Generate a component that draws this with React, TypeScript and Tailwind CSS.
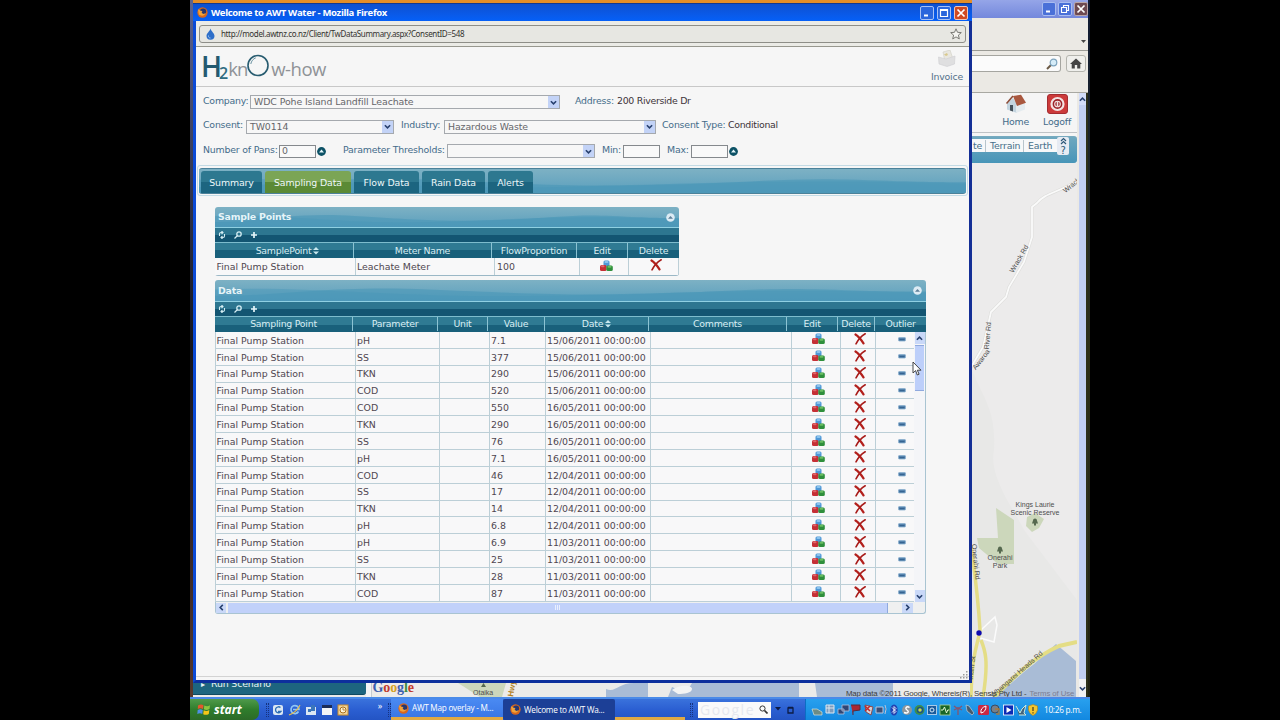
import { ReactNode } from "react";
import clsx from "clsx";

type SampleRow = {
  parameter: string;
  value: string;
  date: string;
};

const rows: SampleRow[] = [
  { parameter: "pH", value: "7.1", date: "15/06/2011" },
  { parameter: "SS", value: "377", date: "15/06/2011" },
  { parameter: "TKN", value: "290", date: "15/06/2011" },
  { parameter: "COD", value: "520", date: "15/06/2011" },
  { parameter: "COD", value: "550", date: "16/05/2011" },
  { parameter: "TKN", value: "290", date: "16/05/2011" },
  { parameter: "SS", value: "76", date: "16/05/2011" },
  { parameter: "pH", value: "7.1", date: "16/05/2011" },
  { parameter: "COD", value: "46", date: "12/04/2011" },
  { parameter: "SS", value: "17", date: "12/04/2011" },
  { parameter: "TKN", value: "14", date: "12/04/2011" },
  { parameter: "pH", value: "6.8", date: "12/04/2011" },
  { parameter: "pH", value: "6.9", date: "11/03/2011" },
  { parameter: "SS", value: "25", date: "11/03/2011" },
  { parameter: "TKN", value: "28", date: "11/03/2011" },
  { parameter: "COD", value: "87", date: "11/03/2011" },
];

const tabs = [
  { label: "Summary", width: "w-[61px]" },
  { label: "Sampling Data", width: "w-[86px]", active: true },
  { label: "Flow Data", width: "w-[65px]" },
  { label: "Rain Data", width: "w-[63px]" },
  { label: "Alerts", width: "w-[45px]" },
];

/* ---------- icons ---------- */

const FirefoxIcon = () => (
  <svg width="11" height="11" viewBox="0 0 12 12" className="shrink-0">
    <circle cx="6" cy="6" r="5.6" fill="#d9661c" />
    <circle cx="6.6" cy="5" r="3.4" fill="#27366f" />
    <path d="M1 2.500 4 4l2 .3-1 1.400 1.600 1.800 3-.6C8.500 10 4 10.500 2 8Z" fill="#f2a33a" />
  </svg>
);

const EditIcon = () => (
  <svg width="13" height="12" viewBox="0 0 13 12">
    <rect x="3.500" y="0.500" width="6" height="6" rx="1.500" fill="#4e97d6" />
    <rect x="4.500" y="1" width="4" height="2" rx="1" fill="#8cc4ee" />
    <rect x="0" y="5" width="6.500" height="6" rx="1.500" fill="#c52f35" />
    <rect x="1" y="5.300" width="3.500" height="2" rx="1" fill="#e0666a" />
    <rect x="6.300" y="5.500" width="6.500" height="5.500" rx="1.500" fill="#2f8f3c" />
    <rect x="7.500" y="5.800" width="4" height="2" rx="1" fill="#69bd62" />
  </svg>
);

const DeleteIcon = () => (
  <svg width="12" height="12" viewBox="0 0 12 12" fill="none" strokeLinecap="round">
    <path d="M1.500 1.500C4 3 7 6.500 9.500 10.300" stroke="#b3201c" strokeWidth="2.200" />
    <path d="M11.200.8C7.500 3 4.500 6 2 10.800" stroke="#a81c1a" strokeWidth="1.600" />
  </svg>
);

const OutlierIcon = () => (
  <svg width="8" height="5" viewBox="0 0 8 5">
    <rect x="0.500" y="0.500" width="7" height="3.500" rx="0.800" fill="#5583ad" stroke="#8bb0cf" strokeWidth=".8" />
    <path d="M1.500 2.700h5" stroke="#2f5d8c" strokeWidth="1" />
  </svg>
);

const SortIcon = () => (
  <svg width="6" height="8" viewBox="0 0 6 8" fill="#c9e8ef">
    <path d="M3 0 6 3H0ZM3 7.500 0 4.500h6Z" />
  </svg>
);

const Chevron = ({ dir }: { dir: "up" | "down" | "left" | "right" }) => (
  <svg
    width="7"
    height="7"
    viewBox="0 0 8 8"
    className={clsx(
      dir === "up" && "rotate-180",
      dir === "left" && "rotate-90",
      dir === "right" && "-rotate-90"
    )}
  >
    <path d="m1 2.500 3 3 3-3" fill="none" stroke="#27406e" strokeWidth="1.800" />
  </svg>
);

const UpDot = () => (
  <svg width="9" height="9" viewBox="0 0 9 9">
    <circle cx="4.500" cy="4.500" r="4.400" fill="#0d5266" />
    <path d="M4.500 2.500 7 5.500H2Z" fill="#e6f6fa" />
  </svg>
);

const CollapseDot = () => (
  <svg width="9" height="9" viewBox="0 0 9 9">
    <circle cx="4.500" cy="4.500" r="4.300" fill="#dcebf4" />
    <path d="M4.500 3 7 5.800H2Z" fill="#5f7f98" />
  </svg>
);

const Waves = () => (
  <svg className="absolute inset-0 h-full w-full" viewBox="0 0 700 20" preserveAspectRatio="none">
    <path
      d="M0 15C60 16 110 5 210 9s140 6 220 4 110-6 170-4 70 2 100 2V20H0Z"
      fill="#4795b6"
      fillOpacity=".55"
    />
    <path d="M0 9c90-4 190 9 330 6s200-7 370-3v8H0Z" fill="#4a97b9" fillOpacity=".45" />
  </svg>
);

/* ---------- small controls ---------- */

const Label = ({ children, className }: { children: ReactNode; className?: string }) => (
  <span className={clsx("shrink-0 pb-[3px] tracking-[-0.200px] text-[#446c8a]", className)}>{children}</span>
);

const Select = ({ value, className }: { value?: string; className: string }) => (
  <div
    className={clsx(
      "flex h-[14px] shrink-0 items-center justify-between border border-[#a5a9ae] bg-[#f7f7f7] pl-[3px] text-[#66666a]",
      className
    )}
  >
    <span className="tracking-[-0.090px]">{value}</span>
    <span className="flex h-[12px] w-[11px] items-center justify-center bg-[#c3d3f7]">
      <Chevron dir="down" />
    </span>
  </div>
);

const TextBox = ({ value }: { value?: string }) => (
  <div className="flex h-[13px] w-[37px] shrink-0 items-center border border-[#85898d] bg-[#f9f9f9] pl-[2px] text-[#66666a]">
    {value}
  </div>
);

const PanelTitle = ({ children, className }: { children: ReactNode; className: string }) => (
  <div
    className={clsx(
      "relative flex items-center justify-between overflow-hidden rounded-t-[3px] bg-linear-to-b from-[#7db1c4] to-[#5a9fbd] pr-[4px] pl-[3px]",
      className
    )}
  >
    <Waves />
    <span className="relative text-[9.400px] font-bold tracking-[-0.200px] text-[#e6f4f8]">{children}</span>
    <span className="relative">
      <CollapseDot />
    </span>
  </div>
);

const PanelToolbar = () => (
  <div className="flex h-[15px] items-center gap-[8px] border-t border-[#8fd0e2] bg-linear-to-b from-[#2d7690] from-50% to-[#135572] to-50% pl-[3px]">
    <svg width="8" height="8" viewBox="0 0 8 8" fill="none" stroke="#d4edf3" strokeWidth="1.100">
      <path d="M4.500 1.500H3a1.500 1.500 0 0 0-1.500 1.500v2M3.500 6.500H5A1.500 1.500 0 0 0 6.500 5V3M3.500 0l1.500 1.500L3.500 3M4.500 8 3 6.500 4.500 5" />
    </svg>
    <svg width="8" height="8" viewBox="0 0 8 8" fill="none" stroke="#d4edf3" strokeWidth="1.300">
      <circle cx="5" cy="3" r="2.200" />
      <path d="M3.500 4.500.5 7.500" />
    </svg>
    <svg width="8" height="8" viewBox="0 0 8 8" fill="none" stroke="#e6f6fa" strokeWidth="1.700">
      <path d="M4 1v6M1 4h6" />
    </svg>
  </div>
);

const HeadCell = ({ children, last }: { children: ReactNode; last?: boolean }) => (
  <div
    className={clsx(
      "flex items-center justify-center gap-[2px] tracking-[-0.250px] text-[#d9eef3]",
      !last && "border-r border-[#8cc3d3]"
    )}
  >
    {children}
  </div>
);

const Cell = ({ children, className }: { children?: ReactNode; className?: string }) => (
  <div className={clsx("flex items-center border-r border-[#bccfd7]", className)}>{children}</div>
);

/* ---------- panels ---------- */

const SamplePoints = () => (
  <section className="w-[464px] rounded-b-[3px] border-b border-[#9bb8c6]">
    <PanelTitle className="h-[20px]">Sample Points</PanelTitle>
    <PanelToolbar />
    <div className="grid h-[16px] grid-cols-[139px_138px_85px_51px_51px] border-t border-[#7dbccd] bg-linear-to-b from-[#2f7a93] from-50% to-[#19607b] to-50%">
      <HeadCell>
        <span className="pl-[7px]">SamplePoint</span>
        <SortIcon />
      </HeadCell>
      <HeadCell>Meter Name</HeadCell>
      <HeadCell>FlowProportion</HeadCell>
      <HeadCell>Edit</HeadCell>
      <HeadCell last>Delete</HeadCell>
    </div>
    <div className="grid h-[17px] grid-cols-[141px_139px_85px_49px_50px] bg-[#f8f8f9] text-[#4f4650]">
      <Cell className="pt-px pl-[1.500px]">Final Pump Station</Cell>
      <Cell className="pt-px pl-[1px]">Leachate Meter</Cell>
      <Cell className="pt-px pl-[2px]">100</Cell>
      <Cell className="justify-center pb-[2px] pl-[5px]">
        <EditIcon />
      </Cell>
      <Cell className="justify-center pb-[3px] pl-[4px]">
        <DeleteIcon />
      </Cell>
    </div>
  </section>
);

const DataGrid = () => (
  <section className="mt-[4px] w-[711px] rounded-b-[3px]">
    <PanelTitle className="h-[21px]">Data</PanelTitle>
    <PanelToolbar />
    <div className="grid h-[16px] grid-cols-[138px_85px_50px_57px_104px_138px_51px_37px_51px] border-t border-[#7dbccd] bg-linear-to-b from-[#2f7a93] from-50% to-[#19607b] to-50% pb-px">
      <HeadCell>Sampling Point</HeadCell>
      <HeadCell>Parameter</HeadCell>
      <HeadCell>Unit</HeadCell>
      <HeadCell>Value</HeadCell>
      <HeadCell>
        Date
        <SortIcon />
      </HeadCell>
      <HeadCell>Comments</HeadCell>
      <HeadCell>Edit</HeadCell>
      <HeadCell>Delete</HeadCell>
      <HeadCell last>Outlier</HeadCell>
    </div>
    <div className="flex h-[270px]">
      <div className="w-[699px] border-l border-[#bccfd7]">
        {rows.map((row, index) => (
          <div
            key={index}
            className="grid h-[16.870px] grid-cols-[140px_84px_50px_56px_105px_141px_49px_35px_38px] border-b border-[#bccfd7] bg-[#f8f8f9] text-[#4f4650]"
          >
            <Cell className="pt-[1.500px] pl-[0.500px]">Final Pump Station</Cell>
            <Cell className="pt-[1.500px] pl-[1px]">{row.parameter}</Cell>
            <Cell />
            <Cell className="pt-[1.500px] pl-[1px]">{row.value}</Cell>
            <Cell className="pt-[1.500px] pl-[1px] tracking-[-0.020px] whitespace-nowrap">{row.date} 00:00:00</Cell>
            <Cell />
            <Cell className="justify-center pb-px pl-[4px]">
              <EditIcon />
            </Cell>
            <Cell className="justify-center pb-px pl-[4px]">
              <DeleteIcon />
            </Cell>
            <Cell className="justify-center border-r-0 pl-[14px]">
              <OutlierIcon />
            </Cell>
          </div>
        ))}
      </div>
      <div className="flex w-[12px] flex-col items-center border-r border-[#a9c4d2] bg-[#f4f5f8]">
        <span className="flex h-[12px] w-[10px] items-center justify-center bg-[#c9d8f8]">
          <Chevron dir="up" />
        </span>
        <span className="mt-px h-[46px] w-[9px] border-y border-[#8fa9de] bg-[#bdcffa]" />
        <span className="mt-auto flex h-[12px] w-[10px] items-center justify-center bg-[#c9d8f8]">
          <Chevron dir="down" />
        </span>
      </div>
    </div>
    <div className="flex h-[12px] items-center rounded-b-[3px] border-x border-b border-[#a9c4d2] bg-[#eff0f0]">
      <span className="flex h-[10px] w-[10px] items-center justify-center bg-[#c9d8f8]">
        <Chevron dir="left" />
      </span>
      <span className="ml-[2px] flex h-[10px] w-[660px] items-center justify-center gap-px border-r border-[#8fa9de] bg-[#c1d1fa]">
        <i className="h-[5px] w-px bg-[#eaf0ff]" />
        <i className="h-[5px] w-px bg-[#eaf0ff]" />
        <i className="h-[5px] w-px bg-[#eaf0ff]" />
      </span>
      <span className="ml-[14px] flex h-[10px] w-[11px] items-center justify-center bg-[#c9d8f8]">
        <Chevron dir="right" />
      </span>
    </div>
  </section>
);

/* ---------- popup window ---------- */

const TitleButton = ({ children, className }: { children: ReactNode; className: string }) => (
  <span className={clsx("flex h-[14px] w-[14px] items-center justify-center rounded-[2px] border", className)}>
    <svg width="10" height="10" viewBox="0 0 10 10" fill="none" stroke="#fff">
      {children}
    </svg>
  </span>
);

const Logo = () => (
  <div className="flex h-[36px] items-start pl-[5px] font-['Open_Sans',sans-serif]">
    <span className="text-[28px] leading-[38px] font-semibold tracking-[-3px] text-[#235a70]">H</span>
    <span className="pt-[13px] text-[16px] leading-[26px] font-semibold text-[#2f6b80]">2</span>
    <span className="text-[18.500px] leading-[44px] tracking-[-1px] text-[#8f9296]">kn</span>
    <svg width="22" height="23" viewBox="0 0 22 23" className="mt-[7px]" fill="none" stroke="#285c70">
      <circle cx="11" cy="11.500" r="10" strokeWidth="1.600" />
      <path d="M3.800 10c.6-3 2.200-5 5-6.200" strokeWidth="1" stroke="#6a93a2" />
    </svg>
    <span className="ml-[2px] text-[18.500px] leading-[44px] tracking-[-0.500px] text-[#8f9296]">w-how</span>
  </div>
);

const Popup = () => (
  <div className="absolute top-0 left-[193px] flex h-[683px] w-[779px] flex-col bg-[#f6f6f6]">
    <div className="h-[3px] bg-[#e58e27]" />
    <div className="flex h-[18px] items-center border-t border-[#12388f] bg-linear-to-b from-[#0e50cf] to-[#0560f8] pr-[4px] pl-[4px]">
      <FirefoxIcon />
      <span className="ml-[3px] font-['Open_Sans',sans-serif] text-[9.500px] font-bold tracking-[-0.330px] whitespace-nowrap text-white">
        Welcome to AWT Water - Mozilla Firefox
      </span>
      <div className="ml-auto flex gap-[3px]">
        <TitleButton className="border-[#a9c1f4] bg-[#2b66dc]">
          <path d="M2 7.500h4" strokeWidth="2" />
        </TitleButton>
        <TitleButton className="border-[#a9c1f4] bg-[#2b66dc]">
          <path d="M1.500 1.500h7v7h-7zM1.500 2.500h7" strokeWidth="1.200" />
        </TitleButton>
        <TitleButton className="border-[#f0c4b4] bg-[#cf4a22]">
          <path d="m1.500 1.500 7 7m0-7-7 7" strokeWidth="1.700" />
        </TitleButton>
      </div>
    </div>
    <div className="flex min-h-0 flex-1 flex-col border-t-0 border-r-[3px] border-b-[3px] border-l-[3px] border-r-[#142f96] border-b-[#0d2f9c] border-l-[#0b4ad6]">
      <div className="h-[26px] border-b border-[#98988f] bg-[#ebebe6] px-[3px] pt-[4px]">
        <div className="flex h-[18px] items-center rounded-[3px] border border-[#8e8e88] bg-[#e7e7e2] pr-[3px] pl-[5px]">
          <svg width="11" height="12" viewBox="0 0 11 12">
            <path d="M5.500.5C6.500 4 9.500 5 9.500 8a4 3.700 0 0 1-8 0c0-3 3-4 4-7.500Z" fill="#2e6fc9" />
            <path d="M3.500 7.500a2 2 0 0 0 2 2.500" stroke="#9cc6f2" fill="none" />
          </svg>
          <span className="ml-[5px] font-['Noto_Sans',sans-serif] text-[8px] tracking-[-0.360px] text-[#33332f]">
            http://model.awtnz.co.nz/Client/TwDataSummary.aspx?ConsentID=548
          </span>
          <svg width="12" height="12" viewBox="0 0 12 12" className="ml-auto" fill="#f4f4f0" stroke="#6d6d68">
            <path d="m6 .8 1.500 3.500 3.800.3-2.900 2.500.9 3.800L6 8.900l-3.300 2 .9-3.800L.7 4.600l3.800-.3Z" strokeWidth=".9" />
          </svg>
        </div>
      </div>
      <header className="flex h-[40px] shrink-0 justify-between border-b border-[#c8c8c8] pr-[6px]">
        <Logo />
        <div className="flex flex-col items-center pt-[3px] tracking-[-0.200px] text-[#54718a]">
          <svg width="18" height="17" viewBox="0 0 18 17">
            <path d="M5 2 12 0l3 9-8 3Z" fill="#e9e7e0" stroke="#d0cec5" strokeWidth=".6" />
            <path d="M6 4.500 9 3l1 2-2 1Z" fill="#d9c98d" />
            <path d="M0.500 7 8 9l9-3-.5 8L9 16.500 1 14Z" fill="#dfdfe0" stroke="#cfcfd2" strokeWidth=".6" />
          </svg>
          <span className="mt-[4px]">Invoice</span>
        </div>
      </header>
      <div className="pt-[3px] pl-[7px] whitespace-nowrap">
        <div className="flex h-[24px] items-center">
          <Label className="w-[47px]">Company:</Label>
          <Select className="w-[310px]" value="WDC Pohe Island Landfill Leachate" />
          <Label className="ml-[15px] w-[42px]">Address:</Label>
          <span className="pb-[3px] tracking-[-0.300px] text-[#3c3238]">200 Riverside Dr</span>
        </div>
        <div className="flex h-[25px] items-center">
          <Label className="w-[43px]">Consent:</Label>
          <Select className="w-[148px]" value="TW0114" />
          <Label className="ml-[7px] w-[43px]">Industry:</Label>
          <Select className="w-[212px]" value="Hazardous Waste" />
          <Label className="ml-[6px] w-[66px]">Consent Type:</Label>
          <span className="pb-[3px] tracking-[-0.300px] text-[#3c3238]">Conditional</span>
        </div>
        <div className="flex h-[24px] items-center">
          <Label className="w-[76px]">Number of Pans:</Label>
          <TextBox value="0" />
          <span className="ml-px">
            <UpDot />
          </span>
          <Label className="ml-[17px] w-[104px]">Parameter Thresholds:</Label>
          <Select className="w-[148px]" />
          <Label className="ml-[7px] w-[21px]">Min:</Label>
          <TextBox />
          <Label className="ml-[7px] w-[24px]">Max:</Label>
          <TextBox />
          <span className="ml-px">
            <UpDot />
          </span>
        </div>
      </div>
      <div className="mx-px mt-[2px] shrink-0 rounded-[3px] border border-[#c3dbe5] p-px pt-[2px]">
        <nav className="relative flex h-[26px] items-end gap-[3px] overflow-hidden rounded-[3px] border-t border-b border-[#4b8199] bg-linear-to-b from-[#7db1c4] to-[#5a9fbd] pl-[2px]">
          <Waves />
          {tabs.map((tab) => (
            <button
              key={tab.label}
              className={clsx(
                "relative h-[22px] rounded-t-[3px] bg-linear-to-b from-50% to-50% pt-px text-center text-[9.400px] tracking-[-0.100px] whitespace-nowrap text-[#eef8fa]",
                tab.width,
                tab.active ? "from-[#7ba555] to-[#5b8a35]" : "from-[#2d7890] to-[#1c6580]"
              )}
            >
              {tab.label}
            </button>
          ))}
        </nav>
      </div>
      <main className="flex-1 pt-[11px] pl-[19px]">
        <SamplePoints />
        <DataGrid />
      </main>
      <div className="flex h-[4px] justify-end border-t border-[#d3d3d3]" />
    </div>
    <svg width="9" height="9" viewBox="0 0 9 9" className="absolute right-[3px] bottom-[3px]" fill="#9a9a98">
      <path d="M6 0h1.500v1.500H6zM3 3h1.500v1.500H3zM6 3h1.500v1.500H6zM0 6h1.500v1.500H0zM3 6h1.500v1.500H3zM6 6h1.500v1.500H6z" />
    </svg>
  </div>
);

/* ---------- browser behind the popup ---------- */

const HillMap = () => (
  <svg width="107" height="534" viewBox="970 163 107 534" className="block bg-[#ecebeb] font-['Liberation_Sans',sans-serif]">
    <path d="M972 370c12 30 24 40 22 80-6 25 20 60 30 80l53 70v97H970V370Z" fill="#e8e8e7" />
    <path d="M1077 181c-20 12-32 12-40 22l-5 4v30l-8 25-15 25-3 10-15 15-8 35-13 22" fill="none" stroke="#dddddb" strokeWidth="3" />
    <path d="M1077 181c-20 12-32 12-40 22l-5 4v30l-8 25-15 25-3 10-15 15-8 35-13 22" fill="none" stroke="#fafafa" strokeWidth="1.800" />
    <path d="m996 508 18 12v44h-16l-19-16-2-10h21Z" fill="#ccd7bb" />
    <path d="m1027 517 8-4 9 6-5 9-7 4-6-6Z" fill="#ccd7bb" />
    <path d="m981 630 14-13 2 8-3 17-14-4" fill="none" stroke="#fbfbfb" strokeWidth="1.500" />
    <path d="M994 697c14-10 30-26 40-33l22-20 20 17v36Z" fill="#a9bcd6" />
    <path d="M971 545c4 30 7 50 9 85-2 15-8 20-9 67M981 640c4 10 8 20 2 57" fill="none" stroke="#e4dd85" strokeWidth="3.500" />
    <path d="M994 697c20-20 40-40 65-51l18-4" fill="none" stroke="#e4dd85" strokeWidth="4" />
    <circle cx="979" cy="633" r="2.700" fill="#0d0ab0" />
    <g fill="#55684e">
      <path d="M1035 518.500a2 2 0 0 1 2 2l1 3h-2v2h-2v-2h-2l1-3a2 2 0 0 1 2-2Z" />
      <path d="M1000 546.500a2 2 0 0 1 2 2l1 3h-2v2h-2v-2h-2l1-3a2 2 0 0 1 2-2Z" />
    </g>
    <g fontSize="7" fill="#4d4d4d" textAnchor="middle">
      <text x="1035" y="507">Kings Laurie</text>
      <text x="1035" y="515">Scenic Reserve</text>
      <text x="1000" y="560">Onerahi</text>
      <text x="1000" y="568">Park</text>
      <text transform="translate(1021 260) rotate(-60)">Wrack Rd</text>
      <text transform="translate(1073 187) rotate(-40)">Wrack</text>
      <text transform="translate(983 361) rotate(-52)">Awaroa</text>
      <text transform="translate(990 336) rotate(-85)">River Rd</text>
      <text transform="translate(973.500 562) rotate(84)">Onerahi Rd</text>
      <text transform="translate(1018 676) rotate(-41)">Whangarei Heads Rd</text>
      <text transform="translate(974 668) rotate(-84)">Main St</text>
    </g>
  </svg>
);

const BrowserBehind = () => (
  <div className="absolute top-0 left-[970px] flex h-[697px] w-[118px] flex-col bg-[#ebe9e4]">
    <div className="flex h-[18px] items-center justify-end gap-[2px] bg-linear-to-b from-[#95a5e8] to-[#7488dc]">
      <TitleButton className="border-[#a9bcf0] bg-[#4a70d8]">
        <path d="M2 7.500h4" strokeWidth="2" />
      </TitleButton>
      <TitleButton className="border-[#a9bcf0] bg-[#4a70d8]">
        <path d="M3.500 3.500v-2h5v5h-2M1.500 3.500h5v5h-5z" strokeWidth="1.100" />
      </TitleButton>
      <TitleButton className="border-[#b9a5a8] bg-[#6e4a52]">
        <path d="m1.500 1.500 7 7m0-7-7 7" strokeWidth="1.700" />
      </TitleButton>
    </div>
    <div className="flex h-[33px] items-end justify-end border-b border-[#9b9b96] pr-[2px] pb-[7px]">
      <svg width="5" height="3" viewBox="0 0 5 3">
        <path d="M0 0h5L2.500 3Z" fill="#444" />
      </svg>
    </div>
    <div className="flex h-[42px] items-start gap-[5px] border-b border-[#a8a8a2] pt-[4px]">
      <div className="flex h-[17px] w-[91px] items-center justify-end rounded-r-[3px] border border-l-0 border-[#a5a5a0] bg-[#fbfbfb] pr-[2px]">
        <svg width="12" height="12" viewBox="0 0 12 12" fill="none">
          <path d="m1 11 4-4" stroke="#6b5a45" strokeWidth="2" />
          <circle cx="7.500" cy="4.500" r="3.300" fill="#d5ecf8" stroke="#7da3bd" strokeWidth="1.200" />
        </svg>
      </div>
      <div className="flex h-[17px] w-[20px] items-center justify-center rounded-[3px] border border-[#b4b4ae] bg-[#efefec]">
        <svg width="12" height="11" viewBox="0 0 12 11" fill="#444">
          <path d="M6 .5 12 6h-1.700v4.500H7.200V7H4.800v3.500H1.700V6H0Z" />
        </svg>
      </div>
    </div>
    <div className="flex min-h-0 flex-1">
      <div className="flex w-[107px] flex-col overflow-hidden bg-[#f5f5f5]">
        <div className="flex h-[40px] shrink-0 justify-end gap-[14px] border-b border-[#bfc3c6] pt-px pr-[6px] tracking-[-0.200px] text-[#446c8a]">
          <div className="flex flex-col items-center">
            <svg width="22" height="20" viewBox="0 0 22 20">
              <path d="m2 9 6-5 4 6.500v8.500L2 15.500Z" fill="#c3d4df" />
              <path d="m11 11 9-2v6.500L11 19Z" fill="#e4ebef" />
              <path d="M8 2 16 .8l5 8L12 12Z" fill="#a9583f" />
              <path d="M8 2 1.500 9.500" stroke="#8b4a35" strokeWidth="1.500" />
              <path d="M5 11h3v6.500l-3-1Z" fill="#44515b" />
            </svg>
            <span className="mt-[2px]">Home</span>
          </div>
          <div className="flex flex-col items-center">
            <svg width="21" height="20" viewBox="0 0 21 20" fill="none">
              <rect x=".5" y=".5" width="20" height="19" rx="2.500" fill="#cc3a3a" stroke="#a32c30" />
              <circle cx="10.500" cy="10" r="6" stroke="#f3e3e3" strokeWidth="2.200" fill="#9c2228" />
              <circle cx="10.500" cy="10" r="2.800" stroke="#f3e3e3" strokeWidth="1.100" />
              <path d="M10.500 7.500v5" stroke="#f3e3e3" strokeWidth="1.600" />
            </svg>
            <span className="mt-[2px]">Logoff</span>
          </div>
        </div>
        <div className="mt-[3px] flex h-[27px] shrink-0 items-start rounded-r-[3px] border-t border-[#77aabf] bg-linear-to-b from-[#6fa8bf] to-[#4795b8] pt-[2px] tracking-[-0.200px] whitespace-nowrap text-[#47708a]">
          <div className="flex h-[13px] items-center bg-[#f7f8f9]">
            <span className="w-[16px] border-r border-[#b8c5cc] pl-[3px]">te</span>
            <span className="w-[38px] border-r border-[#b8c5cc] pl-[4px]">Terrain</span>
            <span className="w-[33px] pl-[4px]">Earth</span>
          </div>
          <div className="-mt-[2px] flex h-[18px] w-[12px] flex-col items-center justify-between rounded-[2px] bg-[#e6ebf3] text-[10px] leading-[9px] text-[#2d5878]">
            <svg width="7" height="8" viewBox="0 0 7 8" fill="none" stroke="#2d5878" strokeWidth="1.200">
              <path d="m1 4 2.500-2.500L6 4M1 7l2.500-2.500L6 7" />
            </svg>
            <span>?</span>
          </div>
        </div>
        <HillMap />
      </div>
      <div className="ml-[2px] flex w-[7px] flex-col items-center bg-[#c1cff2]">
        <span className="flex h-[12px] w-full items-center justify-center bg-[#d2dcf8]">
          <Chevron dir="up" />
        </span>
        <span className="mt-auto flex h-[18px] w-full items-center justify-center bg-[#f1f2f4]">
          <Chevron dir="down" />
        </span>
      </div>
      <div className="flex-1 bg-[#2d3019]" />
    </div>
  </div>
);

const MapStrip = () => (
  <div className="absolute top-[683px] left-[193px] flex h-[14px] w-[777px] overflow-hidden bg-[#ecebe9]">
    <div className="flex h-[12px] w-[173px] items-start overflow-hidden rounded-br-[3px] border-b border-[#0f4a60] bg-[#1d657f] pl-[8px] text-[#e8f4f7]">
      <span className="text-[8px] leading-[4px]">▸</span>
      <span className="ml-[6px] text-[9.400px] leading-[2px] tracking-[-0.150px]">Run Scenario</span>
    </div>
    <div className="w-[6px] border-r border-[#c6cbd0] bg-[#f4f4f4]" />
    <svg width="598" height="14" viewBox="372 683 598 14" className="font-['Liberation_Sans',sans-serif]">
      <path d="M458 683h48l-4 14h-22Z" fill="#ccd7bb" />
      <path d="M606 689c10 4 12-6 28-6h14v14h-42Zm62 8 4-10 14 6 6-10h107v14ZM815 683h78v14h-76Z" fill="#a9bcd6" />
      <path d="M672 690c8-6 20-5 20-1s-8 5-14 5" fill="#f4f4f3" />
      <text x="372.500" y="692" fontSize="14" fontWeight="bold" fontFamily="Liberation Serif, serif" letterSpacing="-.1">
        <tspan fill="#3c5eb0">G</tspan>
        <tspan fill="#c0392f">o</tspan>
        <tspan fill="#d3a024">o</tspan>
        <tspan fill="#3c5eb0">g</tspan>
        <tspan fill="#3d8c46">l</tspan>
        <tspan fill="#c0392f">e</tspan>
      </text>
      <path d="m481 687 2.500-4 2.500 4Z" fill="#55684e" />
      <text x="473" y="695" fontSize="7" fill="#4d4d4d">Otaika</text>
      <text transform="translate(513 697) rotate(-80)" fontSize="8" fontWeight="bold" fill="#b07d1c">Hwy</text>
    </svg>
  </div>
);

const MapCredits = () => (
  <div className="absolute top-[689px] left-[846px] flex w-[231px] gap-[3px] font-['Liberation_Sans',sans-serif] text-[7.800px] leading-[10px] whitespace-nowrap text-[#3b3b3b]">
    <span className="tracking-[-0.130px]">Map data ©2011 Google, Whereis(R), Sensis Pty Ltd -</span>
    <span className="tracking-[-0.100px] text-[#7c7c92]">Terms of Use</span>
  </div>
);

/* ---------- taskbar ---------- */

const Grip = () => <i className="h-[14px] w-[3px] shrink-0 border-x border-dotted border-[#15327f]" />;

const Taskbar = () => (
  <div className="absolute bottom-0 left-[190px] flex h-[23px] w-[900px] items-stretch border-t-2 border-[#4a8ae8] bg-linear-to-b from-[#3a72dc] via-[#2b5fd2] to-[#2354c4] font-['Open_Sans',sans-serif] text-[8.200px] tracking-[-0.250px] whitespace-nowrap text-white">
    <div className="flex w-[69px] items-center rounded-r-[7px] bg-linear-to-b from-[#4f9a4a] via-[#2f7d2c] to-[#2c6a28] pl-[7px]">
      <svg width="14" height="13" viewBox="0 0 14 13">
        <path d="M1 2.500q3-2 5.500-.3L6 6Q3.500 4.500.8 6Z" fill="#e4572e" />
        <path d="M7.300 2.500q3 1.600 5.700-.2L12.500 6q-3 1.800-5.600.3Z" fill="#8cc63f" />
        <path d="M.7 7Q3.500 5.500 5.800 7l-.5 4Q3 9.500.3 11Z" fill="#4f8fe6" />
        <path d="M6.700 7.200Q9.500 8.700 12.300 7l-.5 4q-3 1.600-5.600.2Z" fill="#f5c518" />
      </svg>
      <span className="ml-[3px] text-[12px] font-bold tracking-normal italic">start</span>
    </div>
    <div className="flex w-[132px] items-center gap-[5px] pl-[7px]">
      <Grip />
      <svg width="76" height="12" viewBox="0 0 76 12" className="-ml-px">
        <rect x="0" y="1" width="10" height="10" rx="2" fill="#dbe7f3" />
        <path d="M7.500 3.500a3 3 0 1 0 .5 4H5" fill="none" stroke="#2c6db4" strokeWidth="1.300" />
        <path d="M25.500 7.500a4 4 0 1 1 .5-2h-6" fill="none" stroke="#8fc6f5" strokeWidth="1.700" />
        <path d="M16 11q8-3 11-10" fill="none" stroke="#e8bf4e" strokeWidth="1.100" />
        <rect x="33" y="3" width="10" height="8" fill="#dbe7f3" />
        <path d="M35 5h3v3h-3zM38 1h4v6h-4z" fill="#3b76bb" />
        <rect x="49" y="1" width="10" height="10" fill="#f3f4f6" />
        <path d="M49 1h10v3H49z" fill="#1c2c58" />
        <rect x="65" y="1" width="10" height="10" fill="#f0d49a" stroke="#c98a2a" />
        <circle cx="70" cy="6" r="3" fill="#fff3d6" stroke="#a86f1d" />
        <path d="M70 4v2h2" stroke="#a86f1d" strokeWidth=".8" fill="none" />
      </svg>
      <span className="mr-px ml-auto pb-[8px] text-[9px]">»</span>
      <Grip />
    </div>
    <div className="flex w-[112px] items-center border-b-[3px] border-[#e0a944] bg-linear-to-b from-[#4a8af2] to-[#3a77e6] pl-[7px]">
      <FirefoxIcon />
      <span className="ml-[3px]">AWT Map overlay - M...</span>
    </div>
    <div className="flex w-[112px] items-center rounded-[2px] bg-[#1c3f96] pl-[7px]">
      <FirefoxIcon />
      <span className="ml-[3px]">Welcome to AWT Wa...</span>
    </div>
    <div className="w-[70px] border-b-[3px] border-[#e0a944]" />
    <div className="flex flex-1 items-center pl-[5px]">
      <Grip />
      <div className="ml-[5px] flex h-[16px] w-[73px] items-center justify-between bg-[#fafafa] pr-[3px] pl-[2px]">
        <span className="text-[14px] leading-[16px] tracking-[1.500px] text-[#e6e8ee]">Google</span>
        <svg width="9" height="9" viewBox="0 0 9 9" fill="none" stroke="#333">
          <circle cx="3.500" cy="3.500" r="2.600" />
          <path d="m5.500 5.500 3 3" strokeWidth="1.700" />
        </svg>
      </div>
      <svg width="24" height="10" viewBox="0 0 24 10" className="ml-[3px]">
        <path d="M1 2h6L4 5.500Z" fill="#0d1c46" />
        <path d="M14 3h5v5h-5zM14 2.500h5" fill="none" stroke="#0d1c46" strokeWidth="1.300" />
      </svg>
    </div>
    <div className="flex w-[285px] items-center border-l border-[#0b6ec4] bg-linear-to-b from-[#28a0ee] to-[#1288e0] pl-[5px]">
      <svg width="230" height="12" viewBox="0 0 230 12" fill="none" className="shrink-0">
        <path d="M1 5h5l5 3v3H3Z" fill="#6d8c86" stroke="#d4e2dd" strokeWidth=".7" />
        <path d="M15 1h8v8h-8zM15 4h8M18 1v8" fill="#7b9bbd" stroke="#dbe6f0" />
        <path d="M27 5h6v5h-6zM31 1h7v6h-7z" fill="#2f4675" stroke="#b2c0dc" strokeWidth=".8" />
        <path d="M40 1h9v5l-7 1v4" fill="#a92732" stroke="#5a2938" />
        <path d="m54 1 8 2-2 8-5-3Z" fill="#d5d1d5" stroke="#8b4a4b" />
        <path d="m54 2 5 5m0-5-5 5" stroke="#c12a2a" strokeWidth="1.500" />
        <path d="M65 3h7v6h-7zM74 1l1 4-1 5" fill="#3b4f78" stroke="#b9c6de" />
        <ellipse cx="83" cy="6" rx="3.700" ry="5.500" fill="#2142b2" />
        <path d="m81 3.500 4 4-2 2v-7l2 2-4 4" stroke="#f0f3ff" strokeWidth=".9" />
        <circle cx="96" cy="6" r="5" fill="#8d969c" />
        <path d="M98.500 3.500c-3-2-5 1-2.500 2.500s1 4-3 2.500" stroke="#fff" strokeWidth="1.400" />
        <circle cx="108.500" cy="6" r="5" fill="#3c8c4c" />
        <circle cx="109" cy="6" r="2.500" fill="#c6d955" stroke="#1e5480" strokeWidth="1.500" />
        <rect x="116.500" y="1.500" width="9" height="9" fill="#1b5b9b" stroke="#a8c9e6" />
        <circle cx="121" cy="6" r="2" stroke="#d9e9f6" />
        <rect x="129" y="1" width="10" height="10" fill="#186526" stroke="#b2d69a" strokeWidth=".8" />
        <path d="M130 6h2l1.500-3 2 6 1.200-3h1.500" stroke="#e2f7d2" />
        <path d="M147 3v8M143 2l4 3 4-3M143 6l4-2 4 2" stroke="#86566f" strokeWidth="1.300" />
        <path d="m155 1 3 1 5 7-2 2-5-4Z" fill="#465b6e" stroke="#c0ccd4" strokeWidth=".7" />
        <rect x="167" y="1" width="11" height="10" rx="1.500" fill="#c92843" />
        <path d="M170 9q-1-5 5-7 0 6-5 7Z" fill="#b91c38" stroke="#fff" />
        <circle cx="184" cy="5" r="4" fill="#76808b" stroke="#394b60" />
        <path d="M184 5h4v5h-3" stroke="#a8793c" strokeWidth="1.300" />
        <rect x="192.500" y="1" width="10" height="10" fill="#0b2bb5" stroke="#fff" strokeWidth=".8" />
        <path d="m195.500 3 5 3-5 3Z" fill="#fff" />
        <path d="m205 2 4 7 2-4 4-4-2 8 2 2h-7" fill="#43637a" stroke="#c9e9df" />
        <path d="m222 .5 4.500 1.500v4q-1 4-4.500 5.500-3.500-1.500-4.500-5.500V2Z" fill="#f3c630" stroke="#a5882b" strokeWidth=".7" />
        <path d="M222 3v4m0 1.300v1.200" stroke="#3f3820" strokeWidth="1.200" />
      </svg>
      <span className="ml-[3px]">10:26 p.m.</span>
    </div>
  </div>
);

const App = () => {
  return (
    <div className="relative h-[720px] w-[1280px] overflow-hidden bg-black font-['DejaVu_Sans',sans-serif] text-[9.400px] leading-[12px]">
      <div className="absolute top-0 left-[190px] h-[697px] w-[3px] bg-linear-to-b from-[#5c6390] via-[#13131c] to-[#57382c]" />
      <div className="absolute top-0 left-[1086px] h-[697px] w-[4px] bg-linear-to-b from-[#101a33] via-[#2d3019] to-[#1f2113]" />
      <BrowserBehind />
      <MapStrip />
      <MapCredits />
      <Popup />
      <Taskbar />
      {/* mouse pointer */}
      <svg width="10" height="15" viewBox="0 0 10 15" className="absolute top-[361px] left-[912px]">
        <path d="M1 1v11l2.600-2.400L5.300 14l1.800-.8-1.800-4H9Z" fill="#fff" stroke="#333" strokeWidth=".9" />
      </svg>
    </div>
  );
};

export default App;
